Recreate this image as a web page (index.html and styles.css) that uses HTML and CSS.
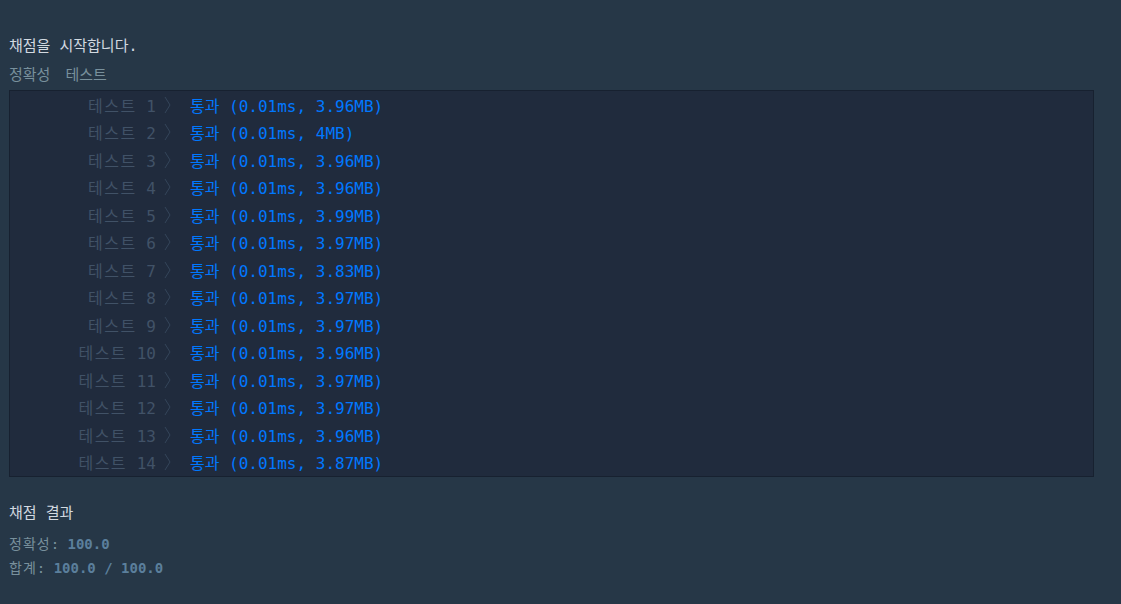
FILE: index.html
```html
<!DOCTYPE html>
<html lang="ko">
<head>
<meta charset="utf-8">
<title>채점 결과</title>
<link rel="stylesheet" href="styles.css">
</head>
<body>
<div class="console">
  <div class="msg">채점을 시작합니다.</div>
  <div class="section-title"><span>정확성</span><span>테스트</span></div>
  <div class="panel">
    <div class="row"><span class="label"><span class="ko">테스트</span> 1</span><svg class="chev" viewBox="0 0 7 18"><polyline points="1,1 6,9 1,17"/></svg><span class="result">통과 (0.01ms, 3.96MB)</span></div>
    <div class="row"><span class="label"><span class="ko">테스트</span> 2</span><svg class="chev" viewBox="0 0 7 18"><polyline points="1,1 6,9 1,17"/></svg><span class="result">통과 (0.01ms, 4MB)</span></div>
    <div class="row"><span class="label"><span class="ko">테스트</span> 3</span><svg class="chev" viewBox="0 0 7 18"><polyline points="1,1 6,9 1,17"/></svg><span class="result">통과 (0.01ms, 3.96MB)</span></div>
    <div class="row"><span class="label"><span class="ko">테스트</span> 4</span><svg class="chev" viewBox="0 0 7 18"><polyline points="1,1 6,9 1,17"/></svg><span class="result">통과 (0.01ms, 3.96MB)</span></div>
    <div class="row"><span class="label"><span class="ko">테스트</span> 5</span><svg class="chev" viewBox="0 0 7 18"><polyline points="1,1 6,9 1,17"/></svg><span class="result">통과 (0.01ms, 3.99MB)</span></div>
    <div class="row"><span class="label"><span class="ko">테스트</span> 6</span><svg class="chev" viewBox="0 0 7 18"><polyline points="1,1 6,9 1,17"/></svg><span class="result">통과 (0.01ms, 3.97MB)</span></div>
    <div class="row"><span class="label"><span class="ko">테스트</span> 7</span><svg class="chev" viewBox="0 0 7 18"><polyline points="1,1 6,9 1,17"/></svg><span class="result">통과 (0.01ms, 3.83MB)</span></div>
    <div class="row"><span class="label"><span class="ko">테스트</span> 8</span><svg class="chev" viewBox="0 0 7 18"><polyline points="1,1 6,9 1,17"/></svg><span class="result">통과 (0.01ms, 3.97MB)</span></div>
    <div class="row"><span class="label"><span class="ko">테스트</span> 9</span><svg class="chev" viewBox="0 0 7 18"><polyline points="1,1 6,9 1,17"/></svg><span class="result">통과 (0.01ms, 3.97MB)</span></div>
    <div class="row"><span class="label"><span class="ko">테스트</span> 10</span><svg class="chev" viewBox="0 0 7 18"><polyline points="1,1 6,9 1,17"/></svg><span class="result">통과 (0.01ms, 3.96MB)</span></div>
    <div class="row"><span class="label"><span class="ko">테스트</span> 11</span><svg class="chev" viewBox="0 0 7 18"><polyline points="1,1 6,9 1,17"/></svg><span class="result">통과 (0.01ms, 3.97MB)</span></div>
    <div class="row"><span class="label"><span class="ko">테스트</span> 12</span><svg class="chev" viewBox="0 0 7 18"><polyline points="1,1 6,9 1,17"/></svg><span class="result">통과 (0.01ms, 3.97MB)</span></div>
    <div class="row"><span class="label"><span class="ko">테스트</span> 13</span><svg class="chev" viewBox="0 0 7 18"><polyline points="1,1 6,9 1,17"/></svg><span class="result">통과 (0.01ms, 3.96MB)</span></div>
    <div class="row"><span class="label"><span class="ko">테스트</span> 14</span><svg class="chev" viewBox="0 0 7 18"><polyline points="1,1 6,9 1,17"/></svg><span class="result">통과 (0.01ms, 3.87MB)</span></div>
  </div>
  <div class="summary-title">채점 결과</div>
  <div class="summary-line first"><span class="ko">정확성</span>: <b>100.0</b></div>
  <div class="summary-line"><span class="ko">합계</span>: <b>100.0 / 100.0</b></div>
</div>
</body>
</html>
```

FILE: styles.css
```css
html, body {
  margin: 0;
  padding: 0;
  background: #263747;
}

.console {
  padding: 36px 27px 0 9px;
  font-family: "DejaVu Sans Mono", "Noto Sans CJK KR", monospace;
}

.msg {
  font-size: 15px;
  line-height: 20px;
  color: #d2d9e0;
}

.section-title {
  margin-top: 9px;
  font-size: 15px;
  line-height: 20px;
  color: #78909c;
  display: flex;
  gap: 15px;
}

.panel {
  margin-top: 5px;
  background: #202b3d;
  border: 1px solid #172130;
}

.row {
  display: flex;
  height: 27.5px;
  align-items: center;
  font-size: 16px;
  white-space: pre;
}

.label {
  width: 146px;
  text-align: right;
  color: #415267;
}

.label .ko {
  letter-spacing: 1.5px;
}

.chev {
  width: 7px;
  height: 18px;
  margin-left: 8px;
  fill: none;
  stroke: #34455a;
  stroke-width: 1;
}

.result {
  margin-left: 19px;
  color: #0078ff;
}

.summary-title {
  margin-top: 26px;
  font-size: 15px;
  line-height: 20px;
  color: #d2d9e0;
}

.summary-line {
  font-size: 14px;
  line-height: 24px;
  color: #78909c;
}

.summary-line .ko {
  letter-spacing: 1px;
}

.summary-line.first {
  margin-top: 9px;
}

.summary-line b {
  color: #5b7f9c;
  font-weight: bold;
}
```
